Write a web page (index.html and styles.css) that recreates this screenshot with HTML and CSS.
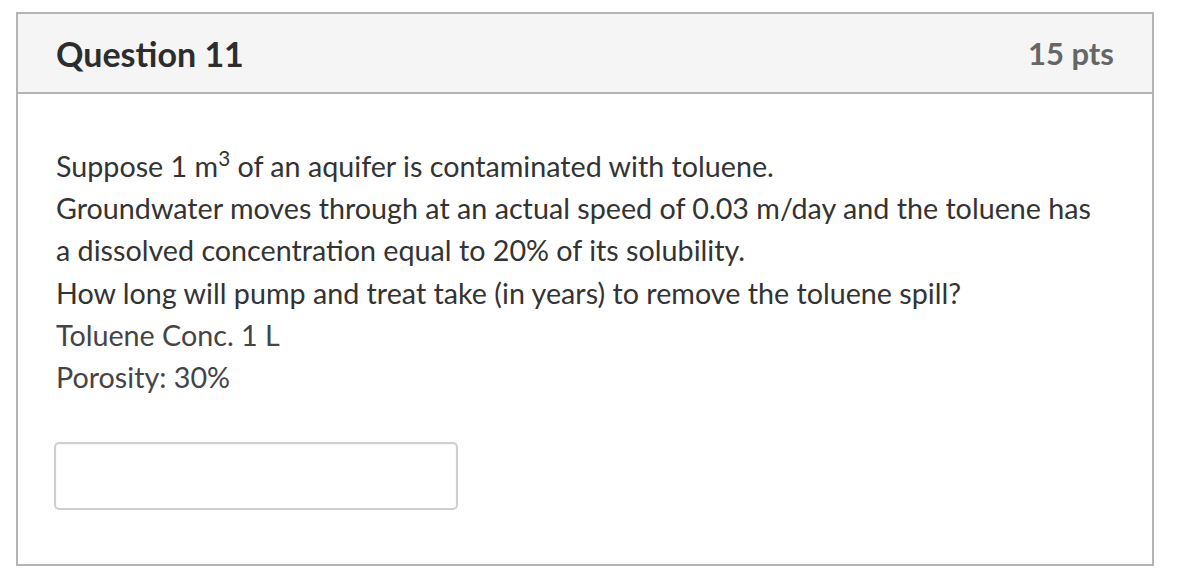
FILE: index.html
```html
<!DOCTYPE html>
<html lang="en">
<head>
<meta charset="utf-8">
<title>Question 11</title>
<link rel="stylesheet" href="styles.css">
</head>
<body>
<div class="question">
  <div class="question-header">
    <h2 class="question-title">Question 11</h2>
    <div class="question-points">15 pts</div>
  </div>
  <div class="question-body">
    <div class="question-text">
      <p>Suppose 1 m<sup>3</sup> of an aquifer is contaminated with toluene.</p>
      <p>Groundwater moves through at an actual speed of 0.03 m/day and the toluene has a dissolved concentration equal to 20% of its solubility.</p>
      <p>How long will pump and treat take (in years) to remove the toluene spill?</p>
      <p class="muted">Toluene Conc. 1 L</p>
      <p class="muted">Porosity: 30%</p>
    </div>
    <div class="answer">
      <input class="answer-input" type="text" aria-label="Answer">
    </div>
  </div>
</div>
</body>
</html>
```
FILE: styles.css
```css
html, body {
  margin: 0;
  padding: 0;
  background: #ffffff;
}
body {
  padding: 12px 16px;
  font-family: Lato, "Open Sans", "Liberation Sans", sans-serif;
  color: #333333;
}
.question {
  width: 1138px;
  height: 554px;
  box-sizing: border-box;
  border: 2px solid #b4b4b4;
  display: flex;
  flex-direction: column;
}
.question-header {
  height: 80px;
  box-sizing: border-box;
  background: #f5f5f5;
  border-bottom: 2px solid #b4b4b4;
  display: flex;
  align-items: center;
  justify-content: space-between;
  padding: 0 38px 0 38px;
}
.question-title {
  margin: 0;
  font-size: 34px;
  font-weight: 700;
  color: #2d2d2d;
}
.question-points {
  font-size: 31px;
  font-weight: 700;
  color: #666666;
}
.question-body {
  padding: 51px 50px 0 38px;
}
.question-text {
  font-size: 28.7px;
  line-height: 42.2px;
  color: #333333;
}
.question-text p {
  margin: 0;
}
.question-text .muted {
  color: #444444;
}
.question-text sup {
  font-size: 0.72em;
  line-height: 0;
  vertical-align: 0.55em;
}
.answer {
  margin-top: 44px;
}
.answer-input {
  display: block;
  width: 404px;
  height: 68px;
  box-sizing: border-box;
  border: 2px solid #cfcfcf;
  border-radius: 5px;
  background: #ffffff;
  margin: 0 0 0 -2px;
  padding: 0 10px;
  font-family: inherit;
  font-size: 24px;
  box-shadow: inset 0 1px 2px rgba(0,0,0,0.06);
}
```
